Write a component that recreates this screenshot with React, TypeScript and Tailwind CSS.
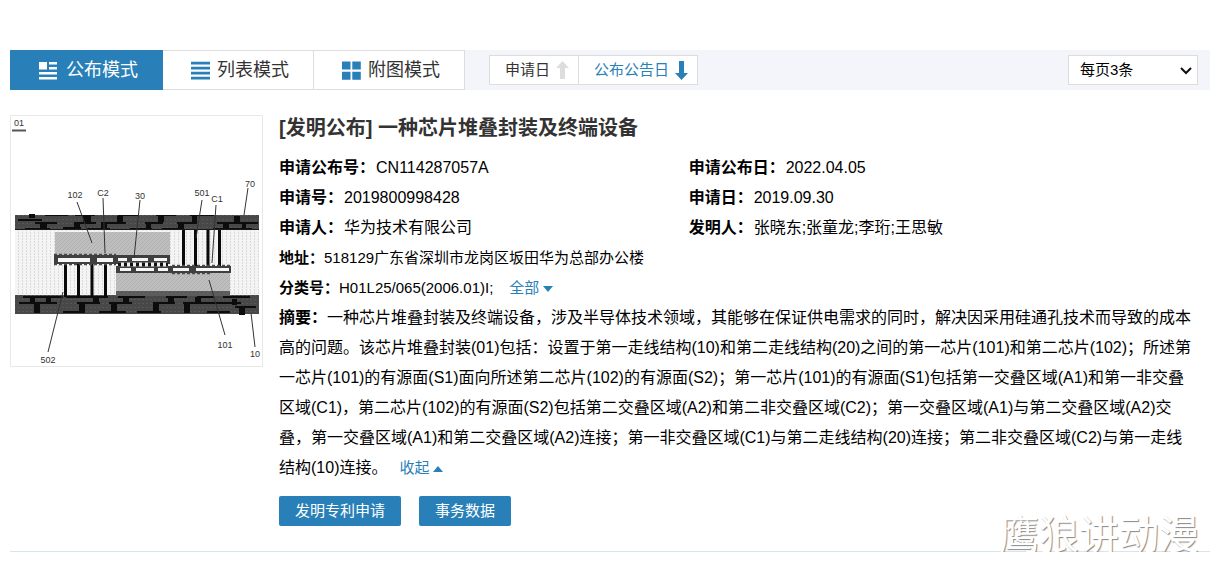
import React from 'react';

interface Field {
  label: string;
  value: string;
}

const leftFields: Field[] = [
  { label: '申请公布号：', value: 'CN114287057A' },
  { label: '申请号：', value: '2019800998428' },
  { label: '申请人：', value: '华为技术有限公司' },
];

const rightFields: Field[] = [
  { label: '申请公布日：', value: '2022.04.05' },
  { label: '申请日：', value: '2019.09.30' },
  { label: '发明人：', value: '张晓东;张童龙;李珩;王思敏' },
];

// x, y, width, height of the dark traces in the two wiring layers
const traces = [
  [19, 99, 6, 4], [8, 104, 24, 2], [25, 107, 22, 2], [30, 109, 7, 4], [15, 113, 25, 2], [35, 100, 23, 1],
  [73, 101, 8, 6], [64, 107, 22, 2], [64, 108, 6, 5], [53, 112, 18, 2], [65, 100, 20, 1],
  [107, 101, 6, 7], [91, 107, 25, 2], [91, 108, 6, 5], [77, 113, 23, 2], [108, 100, 20, 1],
  [148, 101, 6, 6], [135, 107, 18, 2], [136, 108, 5, 5], [120, 113, 22, 2], [146, 100, 20, 1],
  [182, 101, 5, 7], [167, 107, 20, 2], [168, 108, 6, 6], [152, 113, 20, 2], [180, 100, 24, 1],
  [224, 101, 6, 6], [207, 107, 41, 2], [213, 108, 6, 5], [203, 113, 39, 2], [232, 108, 4, 5],
  [13, 181, 40, 2], [20, 182, 5, 6], [36, 182, 5, 6], [9, 187, 38, 2], [24, 188, 6, 10],
  [56, 181, 42, 2], [83, 182, 6, 6], [67, 187, 23, 2], [69, 188, 6, 10], [53, 196, 22, 2],
  [108, 181, 27, 2], [113, 182, 6, 6], [99, 187, 23, 2], [101, 188, 6, 9], [89, 196, 27, 2],
  [156, 181, 21, 2], [158, 182, 6, 6], [143, 187, 22, 2], [143, 188, 6, 9], [127, 196, 24, 2],
  [187, 181, 17, 2], [185, 182, 6, 6], [173, 187, 36, 2], [174, 188, 6, 10], [197, 196, 23, 2],
  [213, 181, 27, 2], [222, 184, 5, 6], [209, 187, 22, 2], [225, 191, 21, 2], [229, 192, 6, 8],
];

const windows = [
  [48, 143, 32, 4], [87, 143, 16, 4], [108, 143, 9, 3], [122, 143, 16, 3], [144, 143, 13, 3],
  [110, 153, 11, 3], [126, 153, 18, 3], [148, 153, 10, 3], [163, 153, 16, 3], [186, 153, 33, 3],
];

const leaders = [
  'M67 87L82 128', 'M93 83L95 138', 'M130 85L124 143', 'M192 85L186 123', 'M206 90L202 148',
  'M238 73L234 100', 'M53 177L38 237', 'M199 165L215 220', 'M241 198L245 232',
];

const marks: [string, number, number][] = [
  ['01', 9, 11], ['102', 65, 83], ['C2', 93, 81], ['30', 130, 84], ['501', 192, 81],
  ['C1', 207, 87], ['70', 240, 72], ['502', 38, 248], ['101', 215, 233], ['10', 245, 242],
];

const PatentFigure: React.FC = () => (
  <svg viewBox="1 1 251 250" className="block w-full" role="img" aria-label="一种芯片堆叠封装及终端设备">
    <defs>
      <pattern id="dots" width="4" height="3" patternUnits="userSpaceOnUse">
        <rect width="4" height="3" fill="#f4f4f4" />
        <rect width="1" height="2" fill="#dadada" />
      </pattern>
      <pattern id="hatch" width="4" height="4" patternUnits="userSpaceOnUse">
        <rect width="4" height="4" fill="#bebebe" />
        <path d="M0 4L4 0" stroke="#b0b0b0" strokeWidth="1" />
      </pattern>
      <pattern id="layer" width="4" height="4" patternUnits="userSpaceOnUse">
        <rect width="4" height="4" fill="#484848" />
        <rect width="2" height="1" fill="#565656" />
      </pattern>
    </defs>
    <rect x="5" y="115" width="244" height="65" fill="url(#dots)" />
    <rect x="5" y="100" width="244" height="15" fill="url(#layer)" />
    <rect x="5" y="180" width="244" height="19" fill="url(#layer)" />
    <rect x="45" y="117" width="115" height="23" fill="url(#hatch)" />
    <rect x="106" y="157" width="114" height="20" fill="url(#hatch)" />
    <rect x="106" y="176" width="114" height="5" fill="#5c5c5c" />
    {traces.map(([x, y, w, h], i) => (
      <rect key={i} x={x} y={y} width={w} height={h} fill="#0c0c0c" />
    ))}
    <path d="M5 114.500H249" stroke="#1c1c1c" strokeWidth="1" />
    <path d="M55.500 149V182M68.500 149V182M82 149V182M95.500 149V182M173.500 115V152M185.500 115V152M198 115V152M209.500 115V152" stroke="#0a0a0a" strokeWidth="3" />
    <rect x="44" y="140" width="116" height="9" fill="#3f3f3f" />
    <rect x="106" y="151" width="115" height="7" fill="#3f3f3f" />
    <path d="M44 139.500H106M44 149.500H106M162 150.500H221M162 158.500H202" stroke="#4a4a4a" strokeWidth="1.500" strokeDasharray="3 2" />
    <path d="M108 149.500H158" stroke="#eee" strokeWidth="4" />
    <path d="M108 149.500H158" stroke="#111" strokeWidth="4" strokeDasharray="3 3" />
    {windows.map(([x, y, w, h], i) => (
      <rect key={i} x={x} y={y} width={w} height={h} fill="#f6f6f6" />
    ))}
    <path d="M2 15.500H16" stroke="#555" strokeWidth="2" />
    {leaders.map(d => (
      <path key={d} d={d} stroke="#333" strokeWidth="1" />
    ))}
    {marks.map(([text, x, y]) => (
      <text key={text} x={x} y={y} textAnchor="middle" fill="#333" className="font-['Liberation_Sans_Narrow','Liberation_Sans',sans-serif] text-[9px]">{text}</text>
    ))}
  </svg>
);

const CardIcon = () => (
  <svg width="19" height="19" viewBox="0 0 19 19" fill="#fff" aria-hidden="true">
    <path d="M0 1h8v7.500H0zM10 1h8v2.600h-8zM10 6h8v2.500h-8zM0 11h18v2.600H0zM0 16h18v2.600H0z" />
  </svg>
);

const ListIcon = () => (
  <svg width="19" height="19" viewBox="0 0 19 19" fill="#2980b9" aria-hidden="true">
    <path d="M0 .700h19v2.800H0zM0 5.700h19v2.800H0zM0 10.700h19v2.800H0zM0 15.700h19v2.800H0z" />
  </svg>
);

const GridIcon = () => (
  <svg width="19" height="19" viewBox="0 0 19 19" fill="#2980b9" aria-hidden="true">
    <path d="M0 .500h8.500v8H0zM10.300 .500h8.500v8h-8.500zM0 10.700h8.500v8H0zM10.300 10.700h8.500v8h-8.500z" />
  </svg>
);

const FieldColumn: React.FC<{ fields: Field[] }> = ({ fields }) => (
  <dl>
    {fields.map(field => (
      <div key={field.label} className="flex">
        <dt className="font-bold">{field.label}</dt>
        <dd className="pl-px">{field.value}</dd>
      </div>
    ))}
  </dl>
);

const App: React.FC = () => {
  return (
    <div className="relative px-[10px] pt-[50px] pr-[9px] font-['Liberation_Sans','Noto_Sans_CJK_SC',sans-serif] text-black">
      <div className="flex h-10 bg-[#f3f5fa]">
        <div className="flex text-lg text-[#333]">
          <button className="flex items-center gap-2 bg-[#2980b9] pr-[25px] pl-[29px] text-white">
            <CardIcon />
            <span>公布模式</span>
          </button>
          <button className="flex items-center gap-[7px] border-y border-r border-[#ddd] bg-white pr-6 pl-7">
            <ListIcon />
            <span>列表模式</span>
          </button>
          <button className="flex items-center gap-[7px] border-y border-r border-[#ddd] bg-white pr-6 pl-7">
            <GridIcon />
            <span>附图模式</span>
          </button>
        </div>
        <div className="my-[5px] ml-6 flex border border-[#ddd] bg-white text-[15px]">
          <button className="flex items-center gap-[6px] border-r border-[#ddd] pr-[9px] pl-[15px] text-[#333]">
            申请日
            <svg width="13" height="19" viewBox="0 0 13 19" fill="#ddd" aria-hidden="true">
              <path d="M6.500 0L13 7H9V18H4V7H0z" />
            </svg>
          </button>
          <button className="flex items-center gap-[6px] pr-[9px] pl-[15px] text-[#2980b9]">
            公布公告日
            <svg width="13" height="19" viewBox="0 0 13 19" fill="#2980b9" aria-hidden="true">
              <path d="M4 0H9V12H13L6.500 19L0 12H4z" />
            </svg>
          </button>
        </div>
        <div className="relative my-[5px] mr-3 ml-auto">
          <select aria-label="每页条数" className="h-full w-[130px] appearance-none border border-[#ddd] bg-white pl-[11px] text-[15px]">
            <option>每页3条</option>
          </select>
          <svg className="pointer-events-none absolute top-3 right-[6px]" width="12" height="8" viewBox="0 0 12 8" fill="none" stroke="#111" strokeWidth="2" aria-hidden="true">
            <path d="M1 1L6 6L11 1" />
          </svg>
        </div>
      </div>

      <div className="mt-[23px] flex border-b border-[#d9e5ed] pb-[25px]">
        <div className="mt-[2px] mr-4 w-[253px] shrink-0 self-start border border-[#e8e8e8]">
          <PatentFigure />
        </div>
        <div className="min-w-0 flex-1 text-base leading-[30px]">
          <h1 className="mb-[10px] text-xl leading-[30px] font-bold text-[#333]">[发明公布] 一种芯片堆叠封装及终端设备</h1>
          <div className="grid grid-cols-[44%_1fr]">
            <FieldColumn fields={leftFields} />
            <FieldColumn fields={rightFields} />
          </div>
          <p className="text-[15px] leading-[30px]"><b>地址：</b>518129广东省深圳市龙岗区坂田华为总部办公楼</p>
          <p className="text-[15px] leading-[30px]">
            <b>分类号：</b>H01L25/065(2006.01)I;
            <a href="#" className="ml-4 text-[#2980b9]">
              全部
              <svg className="ml-1 inline" width="10" height="6" viewBox="0 0 10 6" fill="#2980b9" aria-hidden="true">
                <path d="M0 0H10L5 6z" />
              </svg>
            </a>
          </p>
          <p className="pr-[15px]">
            <b>摘要：</b>一种芯片堆叠封装及终端设备，涉及半导体技术领域，其能够在保证供电需求的同时，解决因采用硅通孔技术而导致的成本高的问题。该芯片堆叠封装(01)包括：设置于第一走线结构(10)和第二走线结构(20)之间的第一芯片(101)和第二芯片(102)；所述第一芯片(101)的有源面(S1)面向所述第二芯片(102)的有源面(S2)；第一芯片(101)的有源面(S1)包括第一交叠区域(A1)和第一非交叠区域(C1)，第二芯片(102)的有源面(S2)包括第二交叠区域(A2)和第二非交叠区域(C2)；第一交叠区域(A1)与第二交叠区域(A2)交叠，第一交叠区域(A1)和第二交叠区域(A2)连接；第一非交叠区域(C1)与第二走线结构(20)连接；第二非交叠区域(C2)与第一走线结构(10)连接。
            <a href="#" className="ml-3 text-[15px] text-[#2980b9]">
              收起
              <svg className="ml-1 inline" width="10" height="6" viewBox="0 0 10 6" fill="#2980b9" aria-hidden="true">
                <path d="M0 6H10L5 0z" />
              </svg>
            </a>
          </p>
          <div className="mt-[13px] flex gap-[18px] text-[15px] leading-[30px] text-white">
            <button className="rounded-xs bg-[#2980b9] px-4">发明专利申请</button>
            <button className="rounded-xs bg-[#2980b9] px-4">事务数据</button>
          </div>
        </div>
      </div>

      <div className="pointer-events-none absolute right-5 -bottom-2 text-[40px] leading-[50px] text-white [text-shadow:1px_1px_1px_#888]">鹰狼讲动漫</div>
    </div>
  );
};

export default App;
